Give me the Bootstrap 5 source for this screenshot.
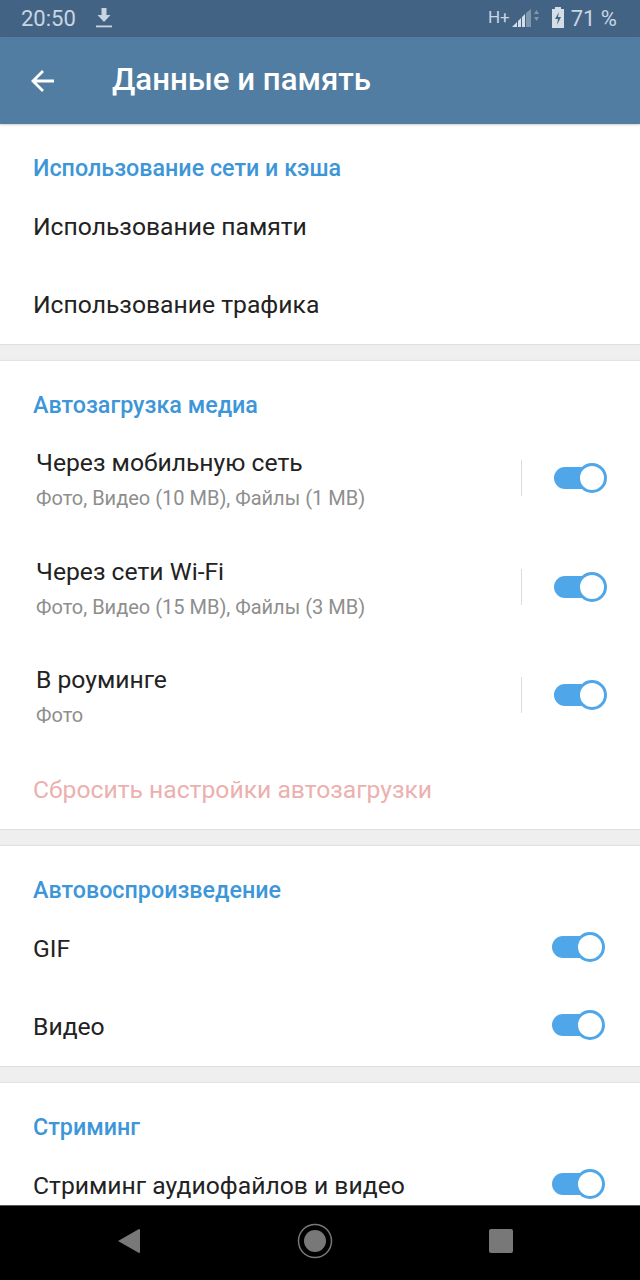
<!DOCTYPE html>
<html lang="ru">
<head>
    <meta charset="UTF-8">
    <meta name="viewport" content="width=device-width, initial-scale=1">
    <title>Данные и память</title>
    <link href="https://cdn.jsdelivr.net/npm/bootstrap@5.3.0/dist/css/bootstrap.min.css" rel="stylesheet">
    <style>
        html, body { height: 1280px; overflow: hidden; }
        body { font-family: Roboto, "Liberation Sans", sans-serif; background: #efefef; color: #222; }
        .status-top { height: 37px; flex: none; background: #426384; color: #c9d6e2; font-size: 22px; padding: 0 23px 0 21px; }
        .dl-icon { margin-left: 20px; }
        .net-type { font-size: 17px; line-height: 1; margin: 0 2px 3px 0; }
        .batt-icon { margin-left: 11px; }
        .batt-text { margin-left: 6px; }
        .app-head { height: 87px; flex: none; background: #517da2; color: #fff; padding-left: 30px; box-shadow: 0 1px 2px rgba(0,0,0,.2); position: relative; }
        .app-title { font-size: 31.2px; font-weight: 500; margin-left: 56px; }
        .scroll-area { flex: 1 1 auto; overflow: hidden; }
        .set-block { background: #fff; margin-bottom: 17px; box-shadow: 0 1px 1px rgba(0,0,0,.06), 0 -1px 1px rgba(0,0,0,.05); }
        .set-head { height: 64px; padding: 24px 33px 0; line-height: 40px; color: #3d96d8; font-size: 23.3px; font-weight: 500; }
        .set-row { height: 78px; padding: 0 35px 0 33px; font-size: 24.7px; }
        .set-row-two { height: 108.5px; padding: 0 33px 0 36px; }
        .row-main { font-size: 24.7px; line-height: 30px; }
        .row-sub { font-size: 20px; line-height: 24px; margin-top: 8px; color: #8e8e8e; }
        .row-rule { width: 1px; height: 36px; background: #dcdcdc; margin: 0 32px 2px 0; }
        .set-reset { color: #ecb0ae; }
        .tgl { width: 53px; height: 30px; position: relative; flex: none; margin-bottom: 4px; }
        .set-row-two .tgl { margin-bottom: 2px; }
        .tgl::before { content: ""; position: absolute; left: 0; top: 4px; width: 46px; height: 22px; border-radius: 11px; background: #4fa6e8; }
        .tgl::after { content: ""; position: absolute; right: 0; top: 0; width: 30px; height: 30px; border-radius: 50%; background: #fff; border: 3px solid #4fa6e8; }
        .nav-bottom { height: 75px; background: #000; border-top: 1px solid #555; padding: 0 127px 4px 117px; flex: none; }
    </style>
</head>
<body class="d-flex flex-column">
    <div class="status-top d-flex align-items-center">
        <span>20:50</span>
        <svg class="dl-icon" width="16" height="24" viewBox="0 0 16 24"><path d="M5.500 1h5v7h4L8 15 1.500 8h4z" fill="#c9d6e2"/><rect y="18.500" width="16" height="1.800" fill="#c9d6e2"/></svg>
        <span class="ms-auto net-type">H+</span>
        <svg width="28" height="22" viewBox="0 0 28 22">
            <path d="M0 19 5 14v5zM6 13l3-3v9H6zM10 9l3-3v13h-3z" fill="#d5dee7"/>
            <path d="M14 5l5-4v18h-5z" fill="#7f97ad"/>
            <path d="M22 6l2.500-4L27 6zM22 9l2.500 4L27 9z" fill="#7f97ad"/>
        </svg>
        <svg class="batt-icon" width="14" height="24" viewBox="0 0 14 24">
            <path d="M4 0h6v2h3v19H1V2h3z" fill="#d5dee7"/>
            <path d="M8 5 4 12h3l-1 6 4-8H7z" fill="#426384"/>
        </svg>
        <span class="batt-text">71 %</span>
    </div>
    <div class="app-head d-flex align-items-center">
        <svg width="26" height="26" viewBox="0 0 26 26"><path d="M24 13H3M13 3 3 13l10 10" fill="none" stroke="#fff" stroke-width="2.800"/></svg>
        <span class="app-title">Данные и память</span>
    </div>
    <div class="scroll-area">
        <div class="set-block">
            <div class="set-head">Использование сети и кэша</div>
            <div class="set-row d-flex align-items-center">Использование памяти</div>
            <div class="set-row d-flex align-items-center">Использование трафика</div>
        </div>
        <div class="set-block">
            <div class="set-head">Автозагрузка медиа</div>
            <div id="autoRows"></div>
            <div class="set-row d-flex align-items-center set-reset">Сбросить настройки автозагрузки</div>
        </div>
        <div class="set-block">
            <div class="set-head">Автовоспроизведение</div>
            <div class="set-row d-flex align-items-center justify-content-between">GIF<span class="tgl"></span></div>
            <div class="set-row d-flex align-items-center justify-content-between">Видео<span class="tgl"></span></div>
        </div>
        <div class="set-block">
            <div class="set-head">Стриминг</div>
            <div class="set-row d-flex align-items-center justify-content-between">Стриминг аудиофайлов и видео<span class="tgl"></span></div>
        </div>
    </div>
    <div class="nav-bottom d-flex align-items-center justify-content-between">
        <svg width="24" height="26" viewBox="0 0 24 26"><path d="M22 1a1 1 0 0 1 1 1v22a1 1 0 0 1-1 1L1 13z" fill="#787878"/></svg>
        <svg width="36" height="36" viewBox="0 0 36 36"><circle cx="18" cy="18" r="16.500" fill="none" stroke="#787878" stroke-width="1.500"/><circle cx="18" cy="18" r="11" fill="#787878"/></svg>
        <svg width="24" height="24" viewBox="0 0 24 24"><rect width="24" height="24" rx="2" fill="#787878"/></svg>
    </div>

    <script>
        const rows = [
            ['Через мобильную сеть', 'Фото, Видео (10 MB), Файлы (1 MB)'],
            ['Через сети Wi-Fi', 'Фото, Видео (15 MB), Файлы (3 MB)'],
            ['В роуминге', 'Фото']
        ];
        let html = '';
        rows.forEach(function (r) {
            html += `<div class="set-row-two d-flex align-items-center"><div class="flex-grow-1"><div class="row-main">${r[0]}</div><div class="row-sub">${r[1]}</div></div><span class="row-rule"></span><span class="tgl"></span></div>`;
        });
        document.getElementById('autoRows').innerHTML = html;
    </script>
</body>
</html>
